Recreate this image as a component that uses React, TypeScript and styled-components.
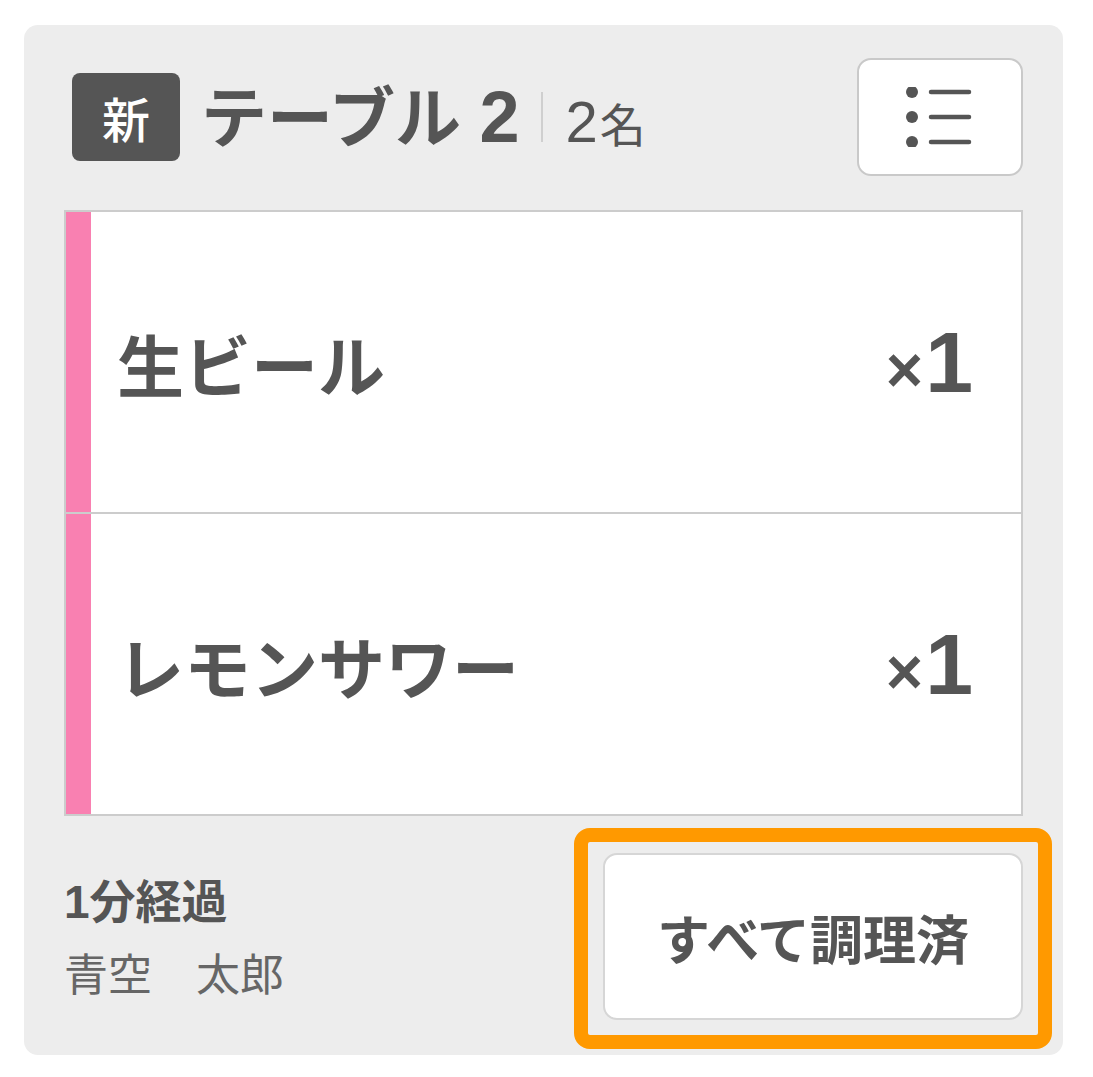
import React from "react";
import styled, { createGlobalStyle } from "styled-components";

const GlobalStyle = createGlobalStyle`
  html, body {
    margin: 0;
    padding: 0;
    background: #ffffff;
  }
  body {
    font-family: "Liberation Sans", "Noto Sans CJK JP", sans-serif;
    color: #555555;
  }
`;

const Page = styled.div`
  padding: 25px 30px 22px 24px;
`;

const Card = styled.section`
  box-sizing: border-box;
  width: 1039px;
  height: 1030px;
  padding: 33px 40px 35px 40px;
  background: #ededed;
  border-radius: 14px;
  display: flex;
  flex-direction: column;
`;

const Header = styled.header`
  height: 118px;
  display: flex;
  align-items: center;
`;

const NewBadge = styled.span`
  width: 108px;
  height: 88px;
  margin-left: 8px;
  border-radius: 8px;
  background: #555555;
  color: #ffffff;
  display: flex;
  align-items: center;
  justify-content: center;
  font-family: "Noto Sans CJK JP", sans-serif;
  font-size: 48px;
  font-weight: 500;
`;

const TitleGroup = styled.div`
  display: flex;
  align-items: baseline;
  margin-left: 21px;
`;

const TableName = styled.h1`
  margin: 0;
  font-size: 66px;
  font-weight: 700;
  line-height: 1;
  color: #555555;
  white-space: pre;
`;

const TableNumber = styled.span`
  font-size: 72px;
`;

const Divider = styled.span`
  align-self: center;
  width: 2px;
  height: 50px;
  margin: 0 22px;
  background: #cfcfcf;
`;

const GuestCount = styled.span`
  font-size: 58px;
  font-weight: 400;
  line-height: 1;
  color: #555555;
`;

const GuestUnit = styled.span`
  font-size: 46px;
  margin-left: 2px;
`;

const MenuButton = styled.button`
  margin-left: auto;
  width: 166px;
  height: 118px;
  box-sizing: border-box;
  border: 2px solid #c9c9c9;
  border-radius: 14px;
  background: #ffffff;
  display: flex;
  align-items: center;
  justify-content: center;
  padding: 0;
  cursor: pointer;
`;

const ItemPanel = styled.div`
  margin-top: 34px;
  border: 2px solid #cccccc;
  background: #ffffff;
  display: flex;
  flex-direction: column;
`;

const ItemRow = styled.div`
  height: 300px;
  display: flex;
  align-items: center;

  & + & {
    border-top: 2px solid #cccccc;
  }
`;

const Stripe = styled.span<{ $color: string }>`
  align-self: stretch;
  width: 25px;
  background: ${(p) => p.$color};
`;

const ItemName = styled.span`
  flex: 1;
  padding-left: 26px;
  font-family: "Noto Sans CJK JP", sans-serif;
  font-size: 67px;
  font-weight: 700;
  color: #555555;
`;

const Quantity = styled.span`
  padding-right: 48px;
  display: flex;
  align-items: baseline;
  font-weight: 700;
  color: #555555;
`;

const Times = styled.span`
  font-size: 64px;
  line-height: 1;
  margin-right: 2px;
`;

const Count = styled.span`
  font-size: 86px;
  line-height: 1;
`;

const Footer = styled.footer`
  margin-top: 37px;
  flex: 1;
  display: flex;
  align-items: center;
  justify-content: space-between;
`;

const OrderInfo = styled.div`
  display: flex;
  flex-direction: column;
  gap: 4px;
`;

const Elapsed = styled.span`
  font-size: 46px;
  font-weight: 700;
  line-height: 66px;
  color: #555555;
`;

const StaffName = styled.span`
  font-family: "Noto Sans CJK JP", sans-serif;
  font-size: 44px;
  font-weight: 400;
  line-height: 66px;
  color: #666666;
`;

const Highlight = styled.div`
  position: relative;
  align-self: stretch;
  display: flex;

  &::after {
    content: "";
    position: absolute;
    inset: -25px -29px -29px -29px;
    border: 14px solid #ff9900;
    border-radius: 16px;
    pointer-events: none;
  }
`;

const DoneButton = styled.button`
  width: 420px;
  box-sizing: border-box;
  border: 2px solid #d6d6d6;
  border-radius: 14px;
  background: #ffffff;
  font-family: "Noto Sans CJK JP", sans-serif;
  font-size: 53px;
  font-weight: 700;
  color: #555555;
  cursor: pointer;
`;

const ListIcon = () => (
  <svg width="70" height="60" viewBox="0 0 70 60" aria-hidden="true">
    <g fill="#555555">
      <circle cx="7" cy="5" r="6" />
      <circle cx="7" cy="30" r="6" />
      <circle cx="7" cy="55" r="6" />
    </g>
    <g stroke="#555555" strokeWidth="4.5" strokeLinecap="round">
      <line x1="26" y1="5" x2="64" y2="5" />
      <line x1="26" y1="30" x2="64" y2="30" />
      <line x1="26" y1="55" x2="64" y2="55" />
    </g>
  </svg>
);

const items = [
  { name: "生ビール", qty: 1, color: "#f980b1" },
  { name: "レモンサワー", qty: 1, color: "#f980b1" },
];

export default function App() {
  return (
    <>
      <GlobalStyle />
      <Page>
        <Card>
          <Header>
            <NewBadge>新</NewBadge>
            <TitleGroup>
              <TableName>
                テーブル <TableNumber>2</TableNumber>
              </TableName>
              <Divider />
              <GuestCount>
                2<GuestUnit>名</GuestUnit>
              </GuestCount>
            </TitleGroup>
            <MenuButton aria-label="メニュー">
              <ListIcon />
            </MenuButton>
          </Header>

          <ItemPanel>
            {items.map((item) => (
              <ItemRow key={item.name}>
                <Stripe $color={item.color} />
                <ItemName>{item.name}</ItemName>
                <Quantity>
                  <Times>×</Times>
                  <Count>{item.qty}</Count>
                </Quantity>
              </ItemRow>
            ))}
          </ItemPanel>

          <Footer>
            <OrderInfo>
              <Elapsed>1分経過</Elapsed>
              <StaffName>青空　太郎</StaffName>
            </OrderInfo>
            <Highlight>
              <DoneButton>すべて調理済</DoneButton>
            </Highlight>
          </Footer>
        </Card>
      </Page>
    </>
  );
}
